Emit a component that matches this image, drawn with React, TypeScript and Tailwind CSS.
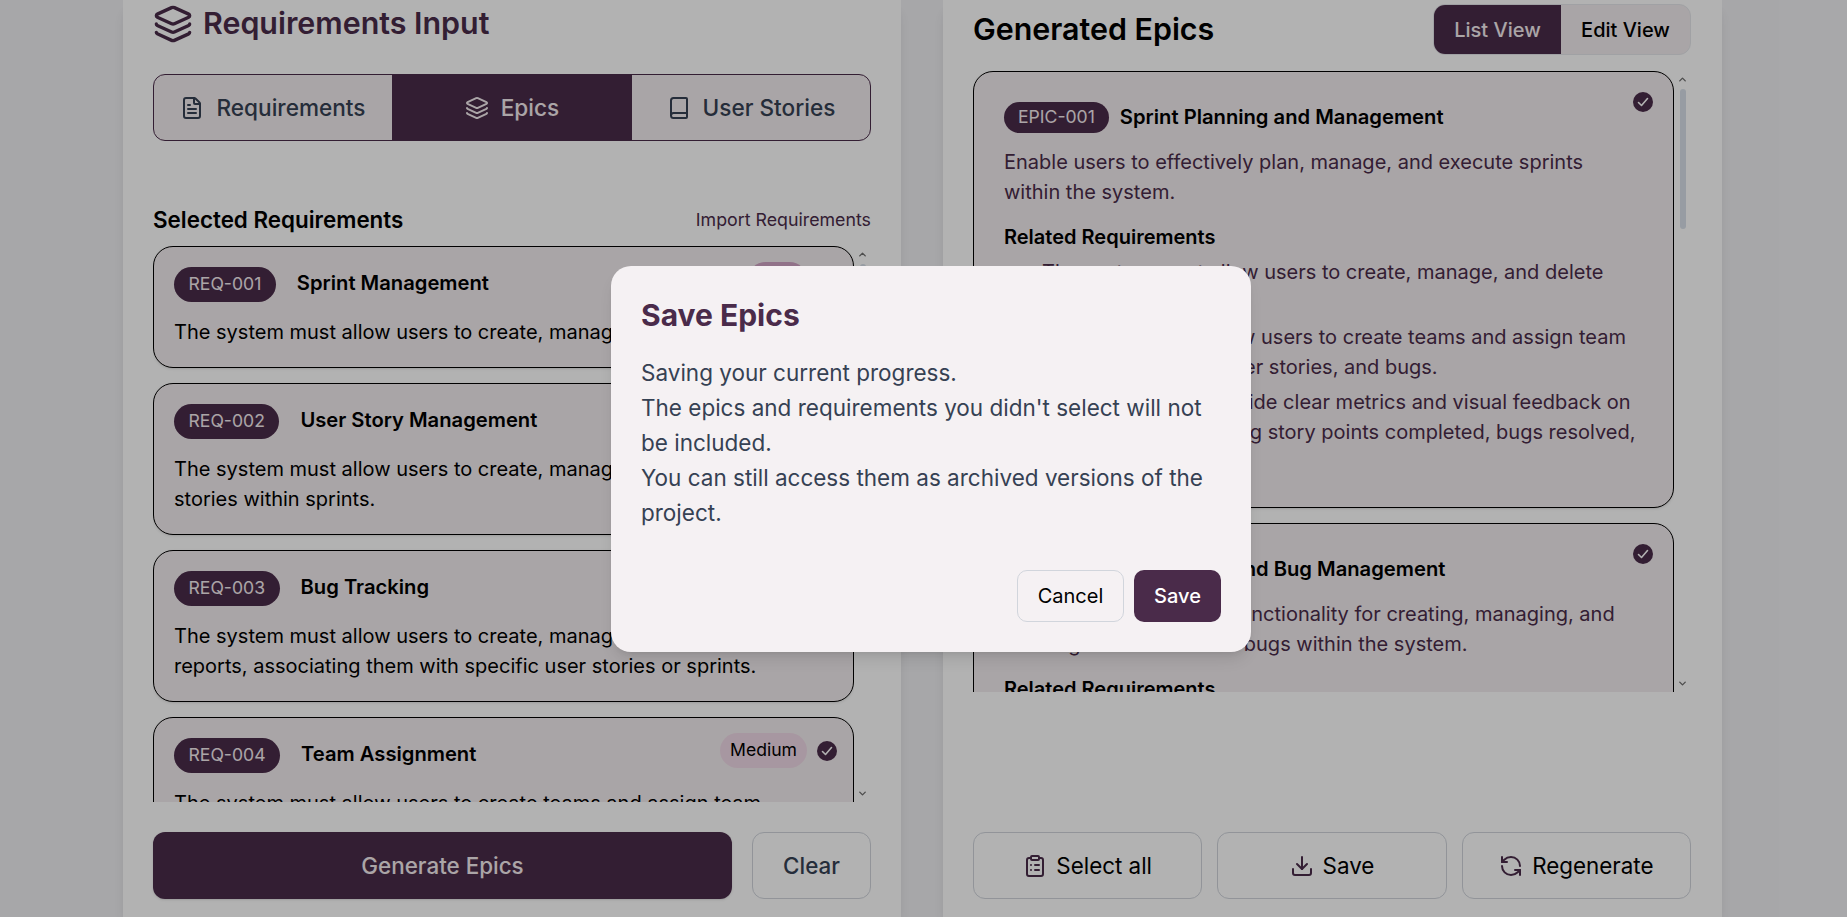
import { Book, ChevronDown, ChevronUp, ClipboardList, Download, FileText, Layers, RefreshCcw } from 'lucide-react';

const requirements = [
  { id: 'REQ-001', title: 'Sprint Management', priority: 'High', text: 'The system must allow users to create, manage, and delete sprints.' },
  { id: 'REQ-002', title: 'User Story Management', priority: 'High', text: 'The system must allow users to create, manage, and prioritize user stories within sprints.' },
  { id: 'REQ-003', title: 'Bug Tracking', priority: 'High', text: 'The system must allow users to create, manage, and track bug reports, associating them with specific user stories or sprints.' },
  { id: 'REQ-004', title: 'Team Assignment', priority: 'Medium', text: 'The system must allow users to create teams and assign team members to sprints, user stories, and bugs.' },
];

const epicRelated = [
  'The system must allow users to create, manage, and delete sprints.',
  'The system shall allow users to create teams and assign team members to tasks, user stories, and bugs.',
  'The system shall provide clear metrics and visual feedback on sprint results, including story points completed, bugs resolved, and velocity.',
];

const epics = [
  { id: 'EPIC-001', title: 'Sprint Planning and Management', text: 'Enable users to effectively plan, manage, and execute sprints within the system.' },
  { id: 'EPIC-002', title: 'User Story and Bug Management', text: 'Provide comprehensive functionality for creating, managing, and tracking user stories and bugs within the system.' },
];

function CheckDot() {
  return (
    <svg width="20" height="20" viewBox="0 0 20 20" className="shrink-0">
      <circle cx="10" cy="10" r="10" fill="#4a2b4a" />
      <path d="M5.5 10.5l3 3 6-7" fill="none" stroke="#ffffff" strokeWidth="1.6" strokeLinecap="round" strokeLinejoin="round" />
    </svg>
  );
}

// drawn scrollbar, headless chrome hides the native one
function ScrollRail({ thumb }: { thumb: string }) {
  return (
    <div className="w-[17px] shrink-0 flex flex-col items-center text-[#6f6f6f]">
      <ChevronUp size={11} strokeWidth={3} className="mt-[3px] mb-1" />
      <div className={`w-[6px] rounded-full bg-[#d8e0ea] ${thumb}`} />
      <ChevronDown size={11} strokeWidth={3} className="mt-auto mb-[3px]" />
    </div>
  );
}

function RequirementCard({ req }: { req: (typeof requirements)[number] }) {
  return (
    <div className="relative bg-[#f3edef] border border-black rounded-[20px] p-5 shadow-sm">
      <div className="absolute top-[15px] right-4 flex items-center gap-[10px]">
        <span className={`h-[35px] px-[10px] rounded-full flex items-center text-[17.6px] text-black ${req.priority === 'High' ? 'bg-[#d0a4c4]' : 'bg-[#f0d9e7]'}`}>
          {req.priority}
        </span>
        <CheckDot />
      </div>
      <div className="flex items-center gap-[21px] mb-[15px]">
        <span className="h-[35px] px-[14.5px] rounded-full bg-[#4a2b4a] text-[#f5edf0] text-[17.6px] flex items-center">{req.id}</span>
        <span className="pb-[3px] text-[20.2px] font-semibold text-black">{req.title}</span>
      </div>
      <p className="text-[20px] leading-[30px] text-black">{req.text}</p>
    </div>
  );
}

function EpicCard({ epic }: { epic: (typeof epics)[number] }) {
  return (
    <div className="relative bg-[#f3edef] border border-black rounded-[20px] p-[30px] shadow-sm">
      <div className="absolute top-5 right-5">
        <CheckDot />
      </div>
      <div className="flex items-center gap-[11px] mb-[14px]">
        <span className="h-[31px] px-[14px] rounded-full bg-[#4a2b4a] text-[#f5edf0] text-[17.6px] flex items-center">{epic.id}</span>
        <span className="text-[20.2px] font-semibold text-black">{epic.title}</span>
      </div>
      <p className="text-[20px] leading-[30px] text-[#4a2b4a]">{epic.text}</p>
      <h4 className="text-[20px] font-semibold text-black leading-[30px] mt-[15px] mb-[5px]">Related Requirements</h4>
      <ul className="list-disc pl-[38px] space-y-[5px] text-[20px] leading-[30px] text-[#4a2b4a]">
        {epicRelated.map((item) => (
          <li key={item}>{item}</li>
        ))}
      </ul>
    </div>
  );
}

export default function App() {
  return (
    <div className="relative h-screen overflow-hidden bg-[#f0f0f3] font-['Inter',sans-serif]">
      <div className="flex pl-[123px] gap-[42px] h-full">
        {/* requirements side */}
        <div className="w-[778px] h-full bg-white shadow-lg px-[30px] pt-1 flex flex-col">
          <div className="h-10 flex items-center gap-[10px]">
            <Layers size={40} strokeWidth={2} className="text-[#4a2b4a]" />
            <h1 className="text-[30.4px] font-semibold text-[#4a2b4a]">Requirements Input</h1>
          </div>

          <div className="mt-[30px] h-[67px] grid grid-cols-[238px_240px_1fr] border border-[#4a2b4a] rounded-xl overflow-hidden bg-[#f3edef] text-[22.6px] font-medium text-gray-700">
            <div className="flex items-center justify-center gap-3">
              <FileText size={24} />
              Requirements
            </div>
            <div className="flex items-center justify-center gap-3 bg-[#4a2b4a] text-[#f5edf0]">
              <Layers size={24} />
              Epics
            </div>
            <div className="flex items-center justify-center gap-3">
              <Book size={24} />
              User Stories
            </div>
          </div>

          <div className="mt-[64px] h-[30px] flex items-center justify-between">
            <h2 className="text-[22.4px] font-semibold text-black">Selected Requirements</h2>
            <span className="text-[17.8px] text-[#4a2b4a]">Import Requirements</span>
          </div>

          <div className="mt-[11px] h-[556px] flex">
            <div className="flex-1 overflow-hidden space-y-[15px]">
              {requirements.map((req) => (
                <RequirementCard key={req.id} req={req} />
              ))}
            </div>
            <ScrollRail thumb="h-[300px]" />
          </div>

          <div className="mt-[30px] flex gap-5">
            <button className="w-[579px] h-[67px] rounded-xl bg-[#4a2b4a] text-[#f5edf0] text-[22.4px] font-medium shadow-sm">Generate Epics</button>
            <button className="flex-1 h-[67px] rounded-xl border border-gray-300 text-gray-700 text-[22.4px] font-medium">Clear</button>
          </div>
        </div>

        {/* epics side */}
        <div className="w-[779px] h-full bg-white shadow-lg pl-[30px] pr-[31px] pt-1 flex flex-col">
          <div className="h-[51px] flex items-center justify-between">
            <h2 className="text-[30.4px] font-semibold text-black">Generated Epics</h2>
            <div className="flex h-[51px] border border-gray-200 rounded-xl overflow-hidden bg-[#f3edef] text-[20px] font-medium">
              <div className="w-[127px] flex items-center justify-center bg-[#4a2b4a] text-[#f5edf0]">List View</div>
              <div className="w-[129px] flex items-center justify-center text-black">Edit View</div>
            </div>
          </div>

          <div className="mt-4 h-[621px] flex">
            <div className="flex-1 overflow-hidden space-y-[15px]">
              {epics.map((epic) => (
                <EpicCard key={epic.id} epic={epic} />
              ))}
            </div>
            <ScrollRail thumb="h-[140px]" />
          </div>

          <div className="mt-[140px] grid grid-cols-3 gap-[15px]">
            <button className="h-[67px] rounded-xl border border-gray-300 flex items-center justify-center gap-[9px] text-[22.4px] text-black">
              <ClipboardList size={24} className="text-[#4a2b4a]" />
              Select all
            </button>
            <button className="h-[67px] rounded-xl border border-gray-300 flex items-center justify-center gap-[9px] text-[22.4px] text-black">
              <Download size={24} className="text-[#4a2b4a]" />
              Save
            </button>
            <button className="h-[67px] rounded-xl border border-gray-300 flex items-center justify-center gap-[9px] text-[22.4px] text-black">
              <RefreshCcw size={24} className="text-[#4a2b4a]" />
              Regenerate
            </button>
          </div>
        </div>
      </div>

      {/* dialog */}
      <div className="absolute inset-0 bg-black/30 flex items-center justify-center pl-[15px]">
        <div className="w-[640px] h-[386px] bg-[#f5f1f3] rounded-[20px] p-[30px] shadow-lg flex flex-col">
          <h3 className="text-[30px] leading-[38px] font-bold text-[#4a2b4a]">Save Epics</h3>
          <p className="mt-[21px] text-[22.5px] leading-[35px] text-gray-700">
            Saving your current progress.
            <br />
            The epics and requirements you didn't select will not be included.
            <br />
            You can still access them as archived versions of the project.
          </p>
          <div className="mt-auto flex justify-end gap-[10px]">
            <button className="h-[52px] w-[107px] rounded-[10px] border border-gray-300 text-[20px] text-black">Cancel</button>
            <button className="h-[52px] w-[87px] rounded-[10px] bg-[#4a2b4a] text-[20px] font-medium text-white">Save</button>
          </div>
        </div>
      </div>
    </div>
  );
}
